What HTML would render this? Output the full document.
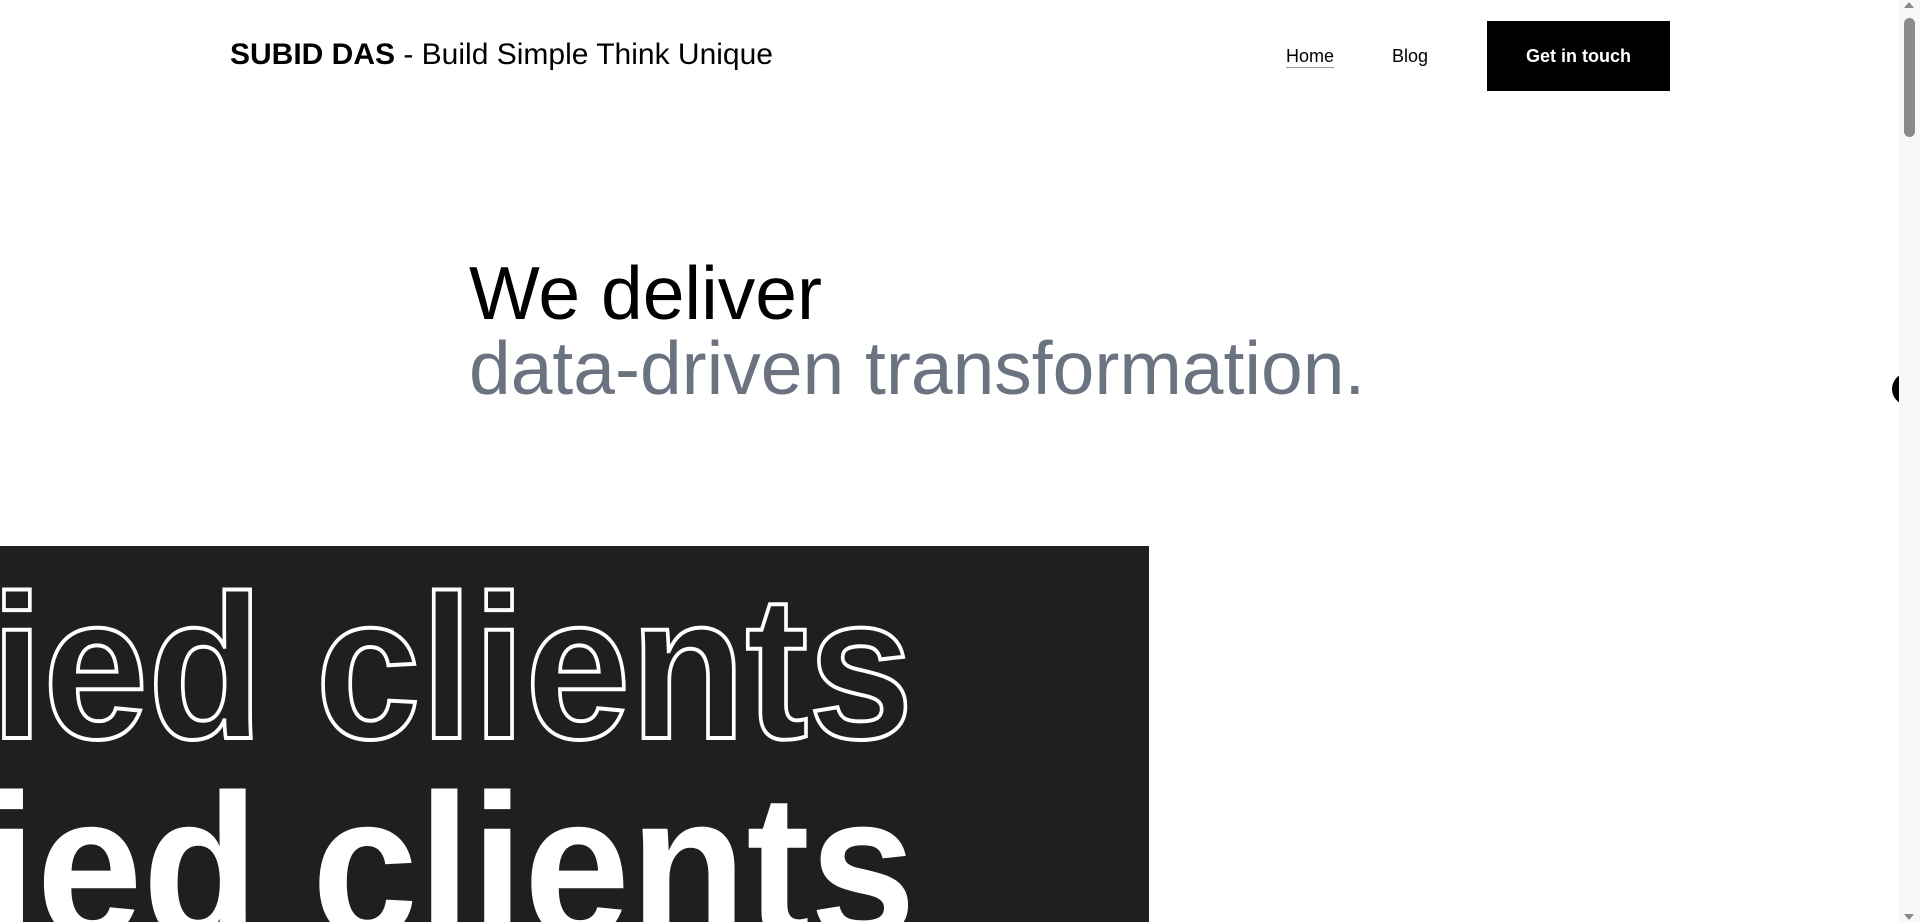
<!DOCTYPE html>
<html><head><meta charset="utf-8"><style>
html,body{margin:0;padding:0;width:1920px;height:922px;overflow:hidden;background:#fff;font-family:"Liberation Sans",Arial,sans-serif;}
.abs{position:absolute;white-space:nowrap;}
</style></head><body>
<div class="abs" style="left:230px;top:37px;font-size:30px;color:#000;line-height:36px;"><b>SUBID DAS</b> - Build Simple Think Unique</div>
<div class="abs" style="left:1286px;top:45px;font-size:18px;line-height:22px;border-bottom:1px solid #999;">Home</div>
<div class="abs" style="left:1392px;top:45px;font-size:18px;line-height:22px;">Blog</div>
<div class="abs" style="left:1487px;top:21px;width:183px;height:70px;background:#000;color:#fff;font-weight:bold;font-size:18px;line-height:70px;text-align:center;">Get in touch</div>
<div class="abs" style="left:469px;top:256px;font-size:75px;line-height:75px;color:#000;">We deliver</div>
<div class="abs" style="left:469px;top:331px;font-size:75px;line-height:75px;color:#6b7280;">data-driven transformation.</div>
<div class="abs" style="left:0;top:546px;width:1149px;height:376px;background:#1f1f1f;overflow:hidden;">
  <div class="abs" style="left:-72px;top:2px;font-size:205px;line-height:240px;color:transparent;-webkit-text-stroke:4px #fff;font-weight:bold;transform:scaleX(0.92);transform-origin:0 0;">fied clients</div>
  <div class="abs" style="left:-80px;top:201px;font-size:205px;line-height:240px;color:#fff;font-weight:bold;transform:scaleX(0.93);transform-origin:0 0;">fied clients</div>
</div>
<div class="abs" style="left:1899px;top:0;width:21px;height:922px;background:#f8f8f8;"></div>
<div class="abs" style="left:1904px;top:18px;width:11px;height:119px;background:#8a8a8a;border-radius:6px;"></div>
<div class="abs" style="left:1904px;top:2px;width:0;height:0;border-left:5px solid transparent;border-right:5px solid transparent;border-bottom:6px solid #888;"></div>
<div class="abs" style="left:1904px;top:914px;width:0;height:0;border-left:5px solid transparent;border-right:5px solid transparent;border-top:6px solid #888;"></div>
<div class="abs" style="left:1892px;top:373px;width:32px;height:32px;border-radius:50%;background:#000;clip-path:inset(0 25px 0 0);"></div>
</body></html>
